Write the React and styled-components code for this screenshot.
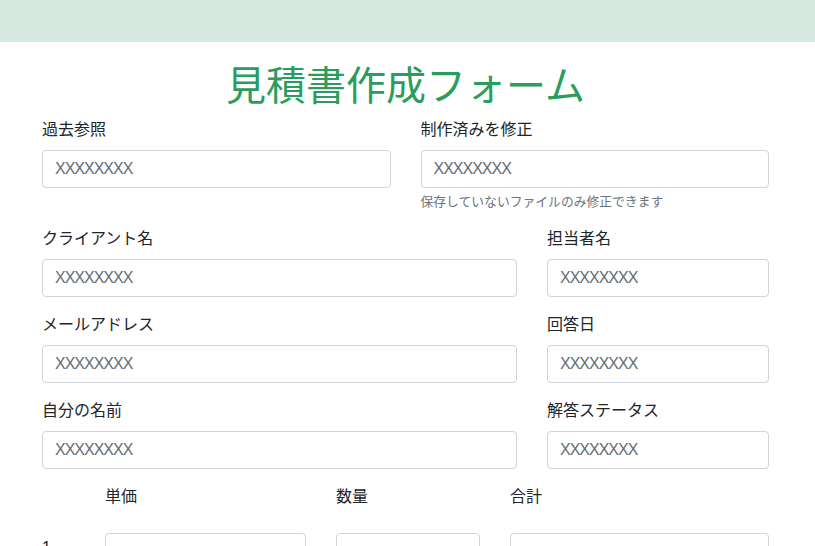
import React from "react";
import styled, { createGlobalStyle } from "styled-components";

const GlobalStyle = createGlobalStyle`
  * { box-sizing: border-box; }
  body {
    margin: 0;
    background: #ffffff;
    color: #212529;
    font-family: "Liberation Sans", "Noto Sans CJK JP", sans-serif;
    font-size: 16px;
    line-height: 1.5;
  }
`;

const TopBar = styled.header`
  height: 42px;
  background-color: #d7e8e0;
`;

const Container = styled.main`
  width: 727px;
  margin: 0 0 0 42px;
  padding-top: 20px;
`;

const Title = styled.h1`
  margin: 0 0 8px;
  text-align: center;
  font-size: 40px;
  font-weight: 400;
  line-height: 1.2;
  color: #2a9d5c;
`;

const Row = styled.div`
  display: grid;
  grid-template-columns: ${(p) => p.$cols || "1fr 1fr"};
  column-gap: 30px;
`;

const Group = styled.div`
  margin-bottom: 16px;
`;

const Label = styled.label`
  display: block;
  margin-bottom: 8px;
  line-height: 24px;
`;

const Input = styled.input`
  display: block;
  width: 100%;
  height: 38px;
  padding: 6px 12px;
  font-family: inherit;
  font-size: 16px;
  letter-spacing: -1px;
  color: #495057;
  background: #fff;
  border: 1px solid #ced4da;
  border-radius: 4px;
  outline: none;
  &::placeholder {
    color: #646d75;
    opacity: 1;
  }
`;

const Help = styled.small`
  display: block;
  margin-top: 4px;
  font-size: 12.8px;
  line-height: 19.2px;
  color: #6c757d;
`;

const ItemGrid = styled.div`
  display: grid;
  grid-template-columns: 33px 201px 144px 259px;
  column-gap: 30px;
`;

const ColHead = styled.div`
  line-height: 24px;
  margin-bottom: 24px;
`;

const RowNum = styled.div`
  padding-top: 3px;
  line-height: 24px;
`;

const Field = ({ label, help }) => (
  <Group>
    <Label>{label}</Label>
    <Input placeholder="XXXXXXXX" />
    {help && <Help>{help}</Help>}
  </Group>
);

export default function App() {
  return (
    <>
      <GlobalStyle />
      <TopBar />
      <Container>
        <Title>見積書作成フォーム</Title>
        <Row>
          <Field label="過去参照" />
          <Field label="制作済みを修正" help="保存していないファイルのみ修正できます" />
        </Row>
        <Row $cols="475px 222px">
          <Field label="クライアント名" />
          <Field label="担当者名" />
        </Row>
        <Row $cols="475px 222px">
          <Field label="メールアドレス" />
          <Field label="回答日" />
        </Row>
        <Row $cols="475px 222px">
          <Field label="自分の名前" />
          <Field label="解答ステータス" />
        </Row>
        <ItemGrid>
          <ColHead />
          <ColHead>単価</ColHead>
          <ColHead>数量</ColHead>
          <ColHead>合計</ColHead>
          <RowNum>1</RowNum>
          <Input />
          <Input />
          <Input />
        </ItemGrid>
      </Container>
    </>
  );
}
